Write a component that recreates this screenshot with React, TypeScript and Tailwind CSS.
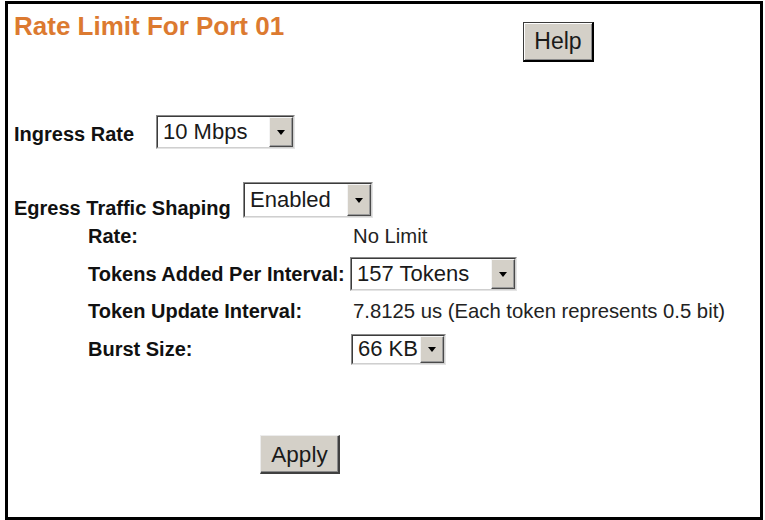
import React from 'react';

const font = { fontFamily: '"Liberation Sans", Arial, sans-serif' };

interface FakeSelectProps {
  value: string;
  className: string;
}

// old windows style drop-down, sunken field plus raised arrow button
const FakeSelect: React.FC<FakeSelectProps> = ({ value, className }) => (
  <div
    className={`flex border border-t-[#8a8a8a] border-l-[#8a8a8a] border-r-[#e4e4e4] border-b-[#e4e4e4] ${className}`}
  >
    <div className="flex flex-1 border border-t-[#3c3c3c] border-l-[#3c3c3c] border-r-[#cfcfcf] border-b-[#cfcfcf] bg-white">
      <div className="flex flex-1 items-center whitespace-nowrap pl-[5px] text-[22px] leading-[22px] text-[#1a1a1a]">{value}</div>
      <div className="flex w-[24px] shrink-0 items-center justify-center border border-t-[#f4f4f4] border-l-[#f4f4f4] border-r-[#4a4a4a] border-b-[#4a4a4a] bg-[#d4d0c8] shadow-[inset_-1px_-1px_0_#9a9a9a]">
        <div className="h-0 w-0 border-l-[4px] border-r-[4px] border-t-[5px] border-l-transparent border-r-transparent border-t-black" />
      </div>
    </div>
  </div>
);

export default function App() {
  return (
    <div className="h-[520px] w-[765px] bg-white" style={font}>
      <div className="ml-[5px] mt-[1px] h-[519px] w-[758px] border-[3px] border-black">
        {/* header */}
        <div className="flex pt-[9px]">
          <div className="w-[515px] pl-[6px] text-[26px] font-bold leading-[26px] text-[#dc7a30]">
            Rate Limit For Port 01
          </div>
          <button className="mt-[9px] h-[40px] w-[71px] border border-r-2 border-b-2 border-[#3a3a3a] border-r-black border-b-black bg-[#d4d0c8] text-[23px] leading-[23px] text-[#1a1a1a] shadow-[inset_1px_1px_0_#ffffff,inset_-1px_-1px_0_#8a8a8a]">
            Help
          </button>
        </div>

        {/* ingress */}
        <div className="mt-[53px] flex h-[34px] items-center pl-[6px]">
          <div className="w-[142px] pt-[3px] text-[20px] font-bold leading-[20px] text-[#111]">Ingress Rate</div>
          <FakeSelect value="10 Mbps" className="h-[34px] w-[139px]" />
        </div>

        {/* egress */}
        <div className="mt-[33px] flex items-end pl-[6px]">
          <div className="w-[229px] text-[20px] font-bold leading-[20px] text-[#111]">Egress Traffic Shaping</div>
          <FakeSelect value="Enabled" className="h-[36px] w-[130px]" />
        </div>

        <div className="pl-[80px] text-[20px] leading-[20px] text-[#111]">
          <div className="mt-[1px] flex h-[34px] items-center">
            <div className="w-[261px] font-bold">Rate:</div>
            <div className="pl-[4px] text-[20.3px] text-[#222]">No Limit</div>
          </div>
          <div className="flex h-[42px] items-center">
            <div className="w-[262px] font-bold">Tokens Added Per Interval:</div>
            <FakeSelect value="157 Tokens" className="h-[34px] w-[167px]" />
          </div>
          <div className="flex h-[32px] items-center">
            <div className="w-[261px] font-bold">Token Update Interval:</div>
            <div className="whitespace-nowrap pl-[4px] text-[20.3px] text-[#222]">7.8125 us (Each token represents 0.5 bit)</div>
          </div>
          <div className="flex h-[44px] items-center">
            <div className="w-[263px] font-bold">Burst Size:</div>
            <FakeSelect value="66 KB" className="h-[31px] w-[95px]" />
          </div>
        </div>

        <button className="ml-[252px] mt-[64px] h-[39px] w-[80px] border border-r-2 border-b-2 border-t-[#ececec] border-l-[#ececec] border-r-[#404040] border-b-[#404040] bg-[#d4d0c8] text-[22.5px] leading-[23px] text-[#1a1a1a] shadow-[inset_-1px_-1px_0_#8a8a8a]">
          Apply
        </button>
      </div>
    </div>
  );
}
